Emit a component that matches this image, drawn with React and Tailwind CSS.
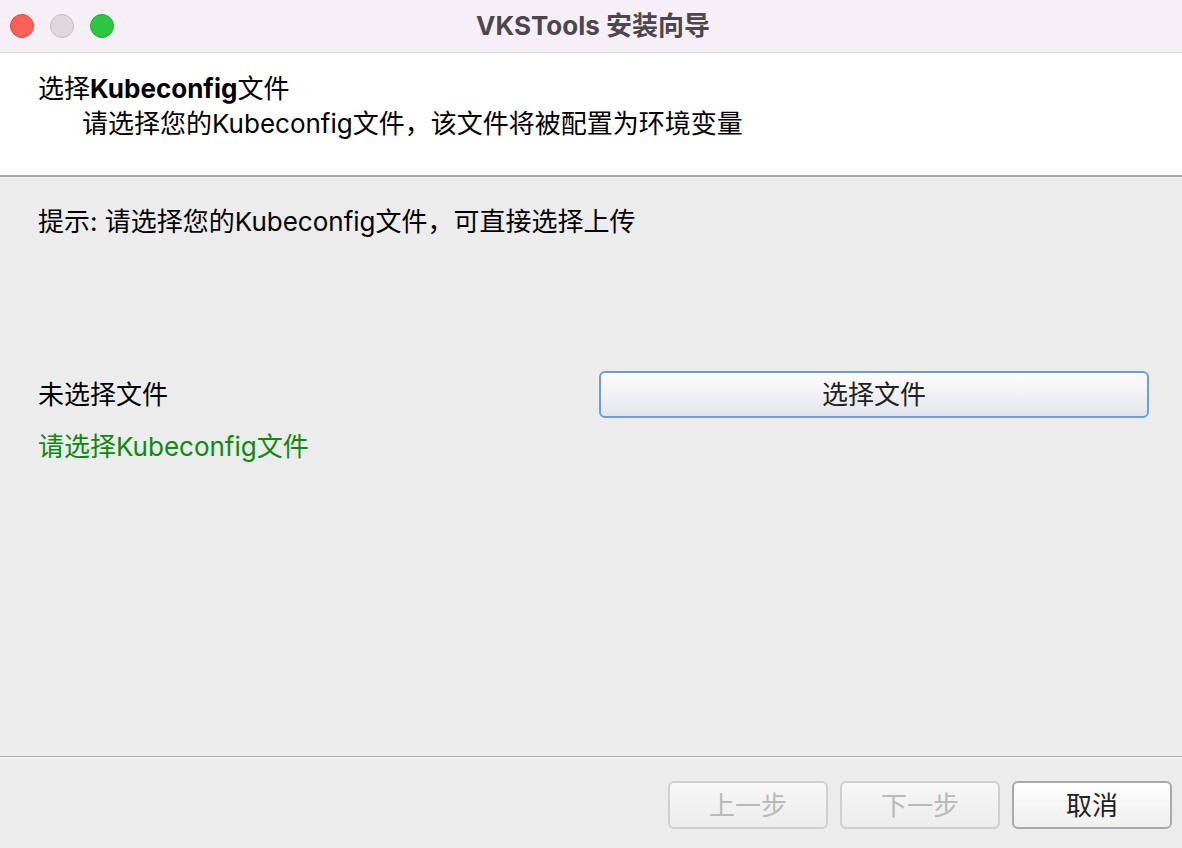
import React from "react";

const font = { fontFamily: 'Inter, "Noto Sans CJK SC", sans-serif' };

export default function App() {
  return (
    <div className="w-[1182px] h-[848px] flex flex-col bg-[#ececec] overflow-hidden text-[#1a1a1a]" style={font}>
      {/* Title bar */}
      <div className="relative h-[53px] shrink-0 bg-[#f6eff6] border-b border-[#d9d6da] flex items-center">
        <div className="flex items-center gap-[16px] pl-[10px]">
          <span className="w-[24px] h-[24px] rounded-full bg-[#fe5f57] border border-[#e2463f]" />
          <span className="w-[24px] h-[24px] rounded-full bg-[#dcd8dc] border border-[#c4bfc4]" />
          <span className="w-[24px] h-[24px] rounded-full bg-[#2ac840] border border-[#1eaa2e]" />
        </div>
        <div className="absolute inset-0 flex items-center justify-center pointer-events-none">
          <span className="text-[26px] font-bold text-[#4b474c] leading-none pl-[4px]">VKSTools 安装向导</span>
        </div>
      </div>

      {/* Header */}
      <div className="h-[122px] shrink-0 bg-white pl-[38px] flex flex-col">
        <div className="mt-[21px] text-[26px] leading-[30px] text-black">
          选择<span className="font-bold">Kubeconfig</span>文件
        </div>
        <div className="mt-[5px] pl-[44px] text-[26px] leading-[30px] text-black">
          请选择您的Kubeconfig文件，该文件将被配置为环境变量
        </div>
      </div>
      <div className="h-[2px] shrink-0 bg-[#a9a9a9]" />
      <div className="h-[1px] shrink-0 bg-[#f4f4f4]" />

      {/* Content */}
      <div className="flex-1 flex flex-col px-[38px] pt-[29px]">
        <div className="text-[26px] leading-[30px] text-black">提示: 请选择您的Kubeconfig文件，可直接选择上传</div>
        <div className="mt-[134px] flex items-center justify-between">
          <div className="text-[26px] leading-[30px] text-black">未选择文件</div>
          <button className="w-[550px] h-[47px] mr-[-5px] rounded-[6px] border-2 border-[#6b9fda] bg-gradient-to-b from-[#fdfdfe] to-[#e4e5ea] text-[26px] text-[#222] flex items-center justify-center">
            选择文件
          </button>
        </div>
        <div className="mt-[14px] text-[26px] leading-[30px] text-[#0c8a0c]">请选择Kubeconfig文件</div>
      </div>

      {/* Footer */}
      <div className="h-[1px] shrink-0 bg-[#a9a9a9]" />
      <div className="h-[1px] shrink-0 bg-[#f6f6f6]" />
      <div className="h-[90px] shrink-0 flex justify-end items-start pt-[23px] pr-[10px] gap-[12px]">
        <button className="w-[160px] h-[48px] rounded-[6px] border-2 border-[#cfcfcf] bg-gradient-to-b from-[#f7f7f7] to-[#ececec] text-[26px] text-[#b9b9b9] flex items-center justify-center">
          上一步
        </button>
        <button className="w-[160px] h-[48px] rounded-[6px] border-2 border-[#cfcfcf] bg-gradient-to-b from-[#f7f7f7] to-[#ececec] text-[26px] text-[#b9b9b9] flex items-center justify-center">
          下一步
        </button>
        <button className="w-[160px] h-[48px] rounded-[6px] border-2 border-[#a9a9a9] bg-gradient-to-b from-[#ffffff] to-[#efefef] text-[26px] text-[#222] flex items-center justify-center">
          取消
        </button>
      </div>
    </div>
  );
}
